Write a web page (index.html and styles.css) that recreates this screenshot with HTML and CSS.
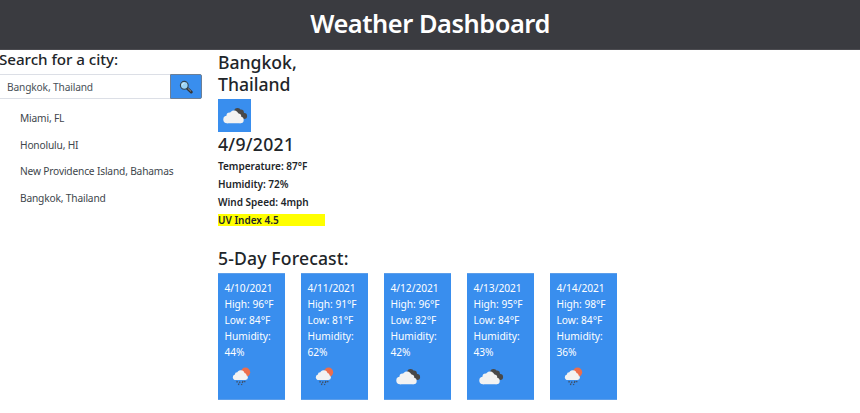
FILE: index.html
```html
<!DOCTYPE html>
<html lang="en">
<head>
<meta charset="utf-8">
<title>Weather Dashboard</title>
<link rel="stylesheet" href="styles.css">
</head>
<body>
<svg class="symbols" aria-hidden="true">
  <symbol id="clouds" viewBox="0 0 33 33">
    <g fill="#484848"><circle cx="19.500" cy="12.200" r="3.200"/><circle cx="23" cy="13.200" r="2.800"/><circle cx="26.200" cy="17" r="2.900"/><path d="M17 12h7l4.500 4-3 4h-5z"/></g>
    <g fill="#f2f2f2"><circle cx="9" cy="20.500" r="3.700"/><circle cx="11.500" cy="16.500" r="3"/><circle cx="16" cy="16.300" r="4.800"/><circle cx="20" cy="17.800" r="3.300"/><circle cx="22.500" cy="21" r="3.200"/><path d="M9 17h13l.5 7.200H9z"/></g>
  </symbol>
  <symbol id="shower" viewBox="0 0 33 33">
    <circle cx="20.500" cy="12.300" r="4.700" fill="#ec6e4c"/>
    <g fill="#f2f2f2"><circle cx="10.700" cy="17.200" r="2.800"/><circle cx="12.200" cy="14.500" r="2.300"/><circle cx="15.800" cy="13.900" r="3.700"/><circle cx="19" cy="15.500" r="2.500"/><circle cx="20.500" cy="17.600" r="2.400"/><path d="M10.500 14h9.500l.5 6h-10z"/></g>
    <path fill="none" stroke="#3f5068" stroke-width="1.300" d="m12.300 21-.5 1.500m3.200-1-.5 1.500m3.500-2-.7 2m2.700-2-.5 1.300m-5.500 1.200-.6 1.500m3.500-1-.5 1"/>
  </symbol>
</svg>
<header class="header"><h1>Weather Dashboard</h1></header>
<main class="layout">
  <aside class="sidebar">
    <h4 class="search-title">Search for a city:</h4>
    <form class="search">
      <input class="search-input" type="text" value="Bangkok, Thailand" aria-label="City">
      <button class="search-button" type="button" aria-label="Search">
        <svg width="14" height="14" viewBox="0 0 14 14">
          <path d="m8.500 8.500 3.700 3.500" stroke="#333" stroke-width="3" stroke-linecap="round"/>
          <path d="m9.200 8.700 2.600 2.500" stroke="#999" stroke-width="1" stroke-linecap="round"/>
          <circle cx="5.300" cy="5.300" r="3.900" fill="#9bd3f5" stroke="#34424d" stroke-width="1.100"/>
          <path d="M3.200 5.200c0-1.500 1-2.200 2.200-2.200" stroke="#e3f5ff" fill="none"/>
        </svg>
      </button>
    </form>
    <ul class="history">
      <li>Miami, FL</li>
      <li>Honolulu, HI</li>
      <li>New Providence Island, Bahamas</li>
      <li>Bangkok, Thailand</li>
    </ul>
  </aside>
  <div class="content">
    <section class="current">
      <h3>Bangkok, Thailand</h3>
      <svg class="current-icon"><use href="#clouds"/></svg>
      <h3 class="date">4/9/2021</h3>
      <p>Temperature: 87°F</p>
      <p>Humidity: 72%</p>
      <p>Wind Speed: 4mph</p>
      <p class="uv">UV Index 4.5</p>
    </section>
    <section>
      <h3 class="forecast-title">5-Day Forecast:</h3>
      <div class="forecast">
        <article class="card"><p>4/10/2021</p><p>High: 96°F</p><p>Low: 84°F</p><p>Humidity: 44%</p><svg><use href="#shower"/></svg></article>
        <article class="card"><p>4/11/2021</p><p>High: 91°F</p><p>Low: 81°F</p><p>Humidity: 62%</p><svg><use href="#shower"/></svg></article>
        <article class="card"><p>4/12/2021</p><p>High: 96°F</p><p>Low: 82°F</p><p>Humidity: 42%</p><svg><use href="#clouds"/></svg></article>
        <article class="card"><p>4/13/2021</p><p>High: 95°F</p><p>Low: 84°F</p><p>Humidity: 43%</p><svg><use href="#clouds"/></svg></article>
        <article class="card"><p>4/14/2021</p><p>High: 98°F</p><p>Low: 84°F</p><p>Humidity: 36%</p><svg><use href="#shower"/></svg></article>
      </div>
    </section>
  </div>
</main>
</body>
</html>
```
FILE: styles.css
```css
* { box-sizing: border-box; }
body {
  margin: 0;
  height: 413px;
  overflow: hidden;
  background: #fff;
  color: #212529;
  font: 10.2px/16px "Noto Sans", "Open Sans", sans-serif;
}
h1, h3, h4, p, ul { margin: 0; padding: 0; }
h1, h3, h4 { font-weight: 500; }
.symbols { position: absolute; width: 0; height: 0; }
.header {
  height: 50px;
  padding-top: 7px;
  background: #3a3b40;
  border-bottom: 1px solid #4b4b50;
  color: #fff;
  text-align: center;
}
h1 { font-size: 25.400px; line-height: 32px; font-weight: 600; letter-spacing: -.45px; }
.layout { display: grid; grid-template-columns: 202px 400px; column-gap: 16px; }
.search-title { margin-left: -1px; font-size: 15.200px; line-height: 19px; letter-spacing: -.05px; }
.search { display: flex; height: 25px; margin-top: 5px; }
.search-input {
  flex: 1;
  min-width: 0;
  padding: 0 7px;
  border: 1px solid #dcdfe6;
  border-left: 0;
  border-right: 0;
  color: #495057;
  font: inherit;
  letter-spacing: -.15px;
}
.search-button {
  display: grid;
  place-items: center;
  width: 32px;
  padding: 0;
  border: 1px solid #6c7f96;
  border-radius: 0 2px 2px 0;
  background: #398eee;
}
.history { list-style: none; margin-top: 6px; padding-left: 20px; color: #40464c; letter-spacing: -.17px; }
.history li { height: 26.670px; line-height: 26.670px; }
.current { width: 107px; padding-top: 1px; }
h3 { font-size: 17.600px; line-height: 22px; }
.current-icon { display: block; width: 33px; height: 33px; margin: 4px 0 0; background: #398eee; }
.date { line-height: 24px; letter-spacing: .3px; }
.current p { height: 12px; margin-bottom: 6px; line-height: 12px; font-weight: 600; font-size: 10px; letter-spacing: 0; white-space: nowrap; }
.current .date { margin-bottom: 4px; }
.current .uv { background: #ff0; margin-bottom: 0; }
.forecast-title { margin-top: 21px; margin-bottom: 4px; letter-spacing: .14px; }
.forecast { display: grid; grid-template-columns: repeat(5, 67px); column-gap: 16px; }
.card { height: 127px; padding: 6px 6px 0 6.5px; background: #398eee; color: #fff; border: solid #5c9eea; border-width: 1px 0; letter-spacing: -.03px; }
.card svg { display: block; width: 33px; height: 33px; }
```
